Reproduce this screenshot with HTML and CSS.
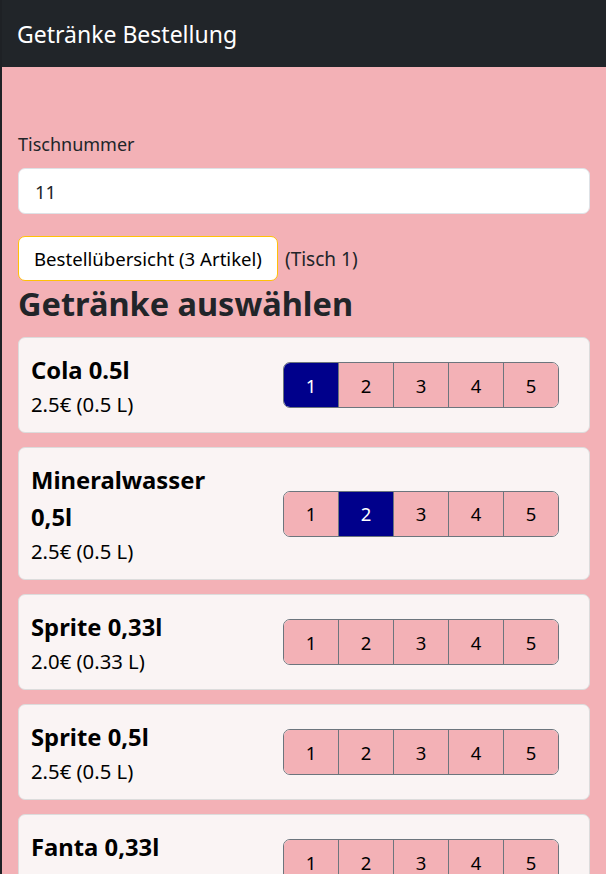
FILE: index.html
```html
<!DOCTYPE html>
<html lang="de">
<head>
<meta charset="utf-8">
<title>Getränke Bestellung</title>
<link rel="stylesheet" href="styles.css">
</head>
<body>
<nav class="navbar">
  <span class="brand">Getränke Bestellung</span>
</nav>
<main class="main">
  <label class="label" for="tisch">Tischnummer</label>
  <input class="input" id="tisch" type="text" value="11">
  <div class="summary">
    <button class="btn-summary" type="button">Bestellübersicht (3 Artikel)</button>
    <span class="table-note">(Tisch 1)</span>
  </div>
  <h2 class="heading">Getränke auswählen</h2>
  <div class="list">
    <div class="card">
      <div class="info">
        <div class="name">Cola 0.5l</div>
        <div class="price">2.5€ (0.5 L)</div>
      </div>
      <div class="group">
        <button class="qty active">1</button><button class="qty">2</button><button class="qty">3</button><button class="qty">4</button><button class="qty">5</button>
      </div>
    </div>
    <div class="card">
      <div class="info">
        <div class="name">Mineralwasser 0,5l</div>
        <div class="price">2.5€ (0.5 L)</div>
      </div>
      <div class="group">
        <button class="qty">1</button><button class="qty active">2</button><button class="qty">3</button><button class="qty">4</button><button class="qty">5</button>
      </div>
    </div>
    <div class="card">
      <div class="info">
        <div class="name">Sprite 0,33l</div>
        <div class="price">2.0€ (0.33 L)</div>
      </div>
      <div class="group">
        <button class="qty">1</button><button class="qty">2</button><button class="qty">3</button><button class="qty">4</button><button class="qty">5</button>
      </div>
    </div>
    <div class="card">
      <div class="info">
        <div class="name">Sprite 0,5l</div>
        <div class="price">2.5€ (0.5 L)</div>
      </div>
      <div class="group">
        <button class="qty">1</button><button class="qty">2</button><button class="qty">3</button><button class="qty">4</button><button class="qty">5</button>
      </div>
    </div>
    <div class="card">
      <div class="info">
        <div class="name">Fanta 0,33l</div>
        <div class="price">2.0€ (0.33 L)</div>
      </div>
      <div class="group">
        <button class="qty">1</button><button class="qty">2</button><button class="qty">3</button><button class="qty">4</button><button class="qty">5</button>
      </div>
    </div>
  </div>
</main>
</body>
</html>
```

FILE: styles.css
```css
* { box-sizing: border-box; }
html, body { margin: 0; padding: 0; }
body {
  background: #f3b1b6;
  border-left: 2px solid #1e2125;
  font-family: "Noto Sans", "Open Sans", sans-serif;
  color: #212529;
  min-height: 874px;
  overflow: hidden;
}
.navbar {
  height: 67px;
  background: #212529;
  display: flex;
  align-items: center;
  margin-left: -2px;
  padding: 0 15px 0 17px;
}
.brand {
  color: #fff;
  font-size: 23px;
  line-height: 1;
  padding-top: 2px;
}
.main {
  padding: 63px 16px 0 16px;
  display: flex;
  flex-direction: column;
}
.label {
  font-size: 18px;
  line-height: 28px;
  margin-bottom: 10px;
}
.input {
  height: 46px;
  width: 100%;
  border: 1px solid #dee2e6;
  border-radius: 7px;
  background: #fff;
  padding: 0 16px;
  font-family: inherit;
  font-size: 18.5px;
  color: #212529;
  outline: none;
}
.summary {
  display: flex;
  align-items: center;
  gap: 7px;
  margin-top: 22px;
}
.btn-summary {
  height: 45px;
  background: #fff;
  border: 1px solid #ffc107;
  border-radius: 7px;
  padding: 0 15px;
  font-family: inherit;
  font-size: 18.6px;
  color: #000;
}
.table-note {
  font-size: 19px;
}
.heading {
  margin: 3px 0 14px 0;
  font-size: 32.5px;
  font-weight: 700;
  line-height: 1.2;
}
.list {
  display: flex;
  flex-direction: column;
  gap: 14px;
}
.card {
  background: #faf4f4;
  border: 1px solid #dcdcdc;
  border-radius: 7px;
  padding: 13.5px 31px 13.5px 12px;
  display: grid;
  grid-template-columns: 210px auto;
  column-gap: 42px;
  align-items: center;
  justify-content: start;
}
.name {
  font-size: 23.8px;
  font-weight: 700;
  line-height: 37px;
  color: #000;
}
.price {
  font-size: 20.3px;
  line-height: 30px;
  color: #000;
}
.group {
  display: flex;
  width: 276px;
  height: 46px;
  border: 1px solid #6c757d;
  border-radius: 7px;
  overflow: hidden;
}
.qty {
  flex: 1;
  height: 100%;
  border: 0;
  border-left: 1px solid #6c757d;
  background: #f3b1b6;
  font-family: inherit;
  font-size: 18.5px;
  color: #000;
  padding: 0;
}
.qty:first-child { border-left: 0; }
.qty.active {
  background: #00008b;
  color: #fff;
}
```
